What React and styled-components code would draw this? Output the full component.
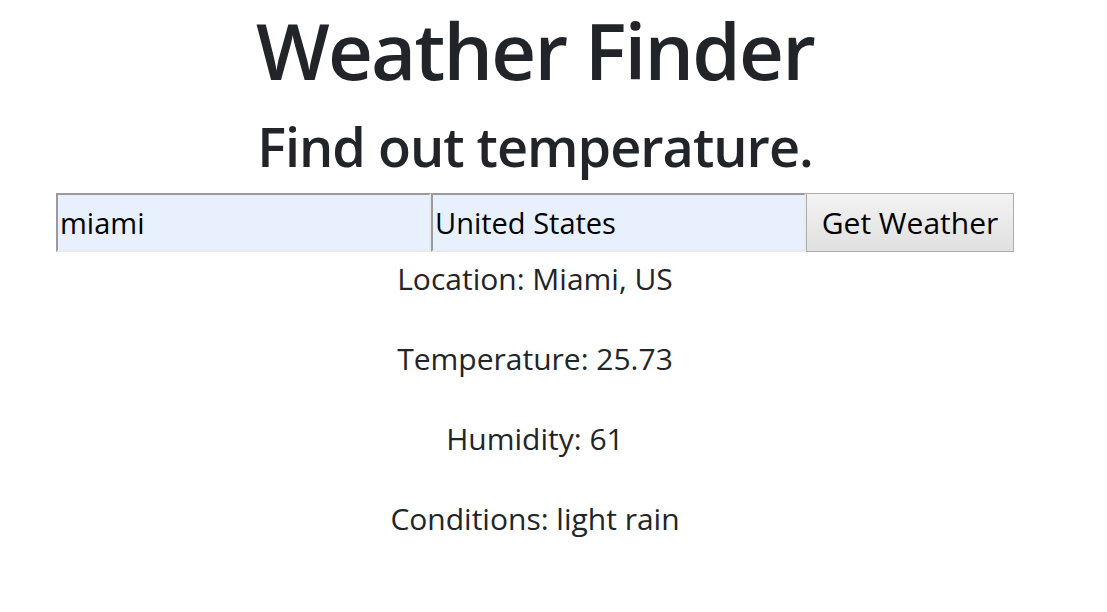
import React from "react";
import styled, { createGlobalStyle } from "styled-components";

const Global = createGlobalStyle`
  html, body { margin: 0; padding: 0; background: #fff; }
  body { font-family: "Open Sans", "Noto Sans", sans-serif; color: #212529; }
`;

const Page = styled.div`
  width: 1070px;
  padding-top: 2px;
  text-align: center;
`;

const Title = styled.h1`
  margin: 0;
  font-size: 78px;
  line-height: 96px;
  font-weight: 600;
  letter-spacing: -1.8px;
`;

const Subtitle = styled.h2`
  margin: 13px 0 0;
  font-size: 54px;
  line-height: 70px;
  font-weight: 600;
  letter-spacing: -1px;
`;

const Form = styled.form`
  display: flex;
  justify-content: center;
  margin-top: 12px;
`;

const Field = styled.input`
  box-sizing: border-box;
  width: 375px;
  height: 59px;
  margin: 0;
  padding: 0 2px;
  border-style: solid;
  border-width: 2px;
  border-color: #9a9a9a #eaeaea #eaeaea #9a9a9a;
  background: #e8f0fe;
  font-family: "Open Sans", "Noto Sans", sans-serif;
  font-size: 29px;
  color: #000;
  outline: none;
`;

const Button = styled.button`
  box-sizing: border-box;
  width: 208px;
  height: 59px;
  margin: 0;
  padding: 0;
  border: 1px solid #adadad;
  background: linear-gradient(#f3f3f3, #e0e0e0);
  font-family: "Open Sans", "Noto Sans", sans-serif;
  font-size: 30px;
  color: #000;
`;

const Info = styled.p`
  margin: 0 0 38px;
  font-size: 30px;
  line-height: 42px;
`;

const Results = styled.div`
  margin-top: 6px;
`;

const rows = [
  "Location: Miami, US",
  "Temperature: 25.73",
  "Humidity: 61",
  "Conditions: light rain",
];

export default function App() {
  return (
    <Page>
      <Global />
      <Title>Weather Finder</Title>
      <Subtitle>Find out temperature.</Subtitle>
      <Form onSubmit={(e) => e.preventDefault()}>
        <Field defaultValue="miami" />
        <Field defaultValue="United States" />
        <Button type="submit">Get Weather</Button>
      </Form>
      <Results>
        {rows.map((r) => (
          <Info key={r}>{r}</Info>
        ))}
      </Results>
    </Page>
  );
}
